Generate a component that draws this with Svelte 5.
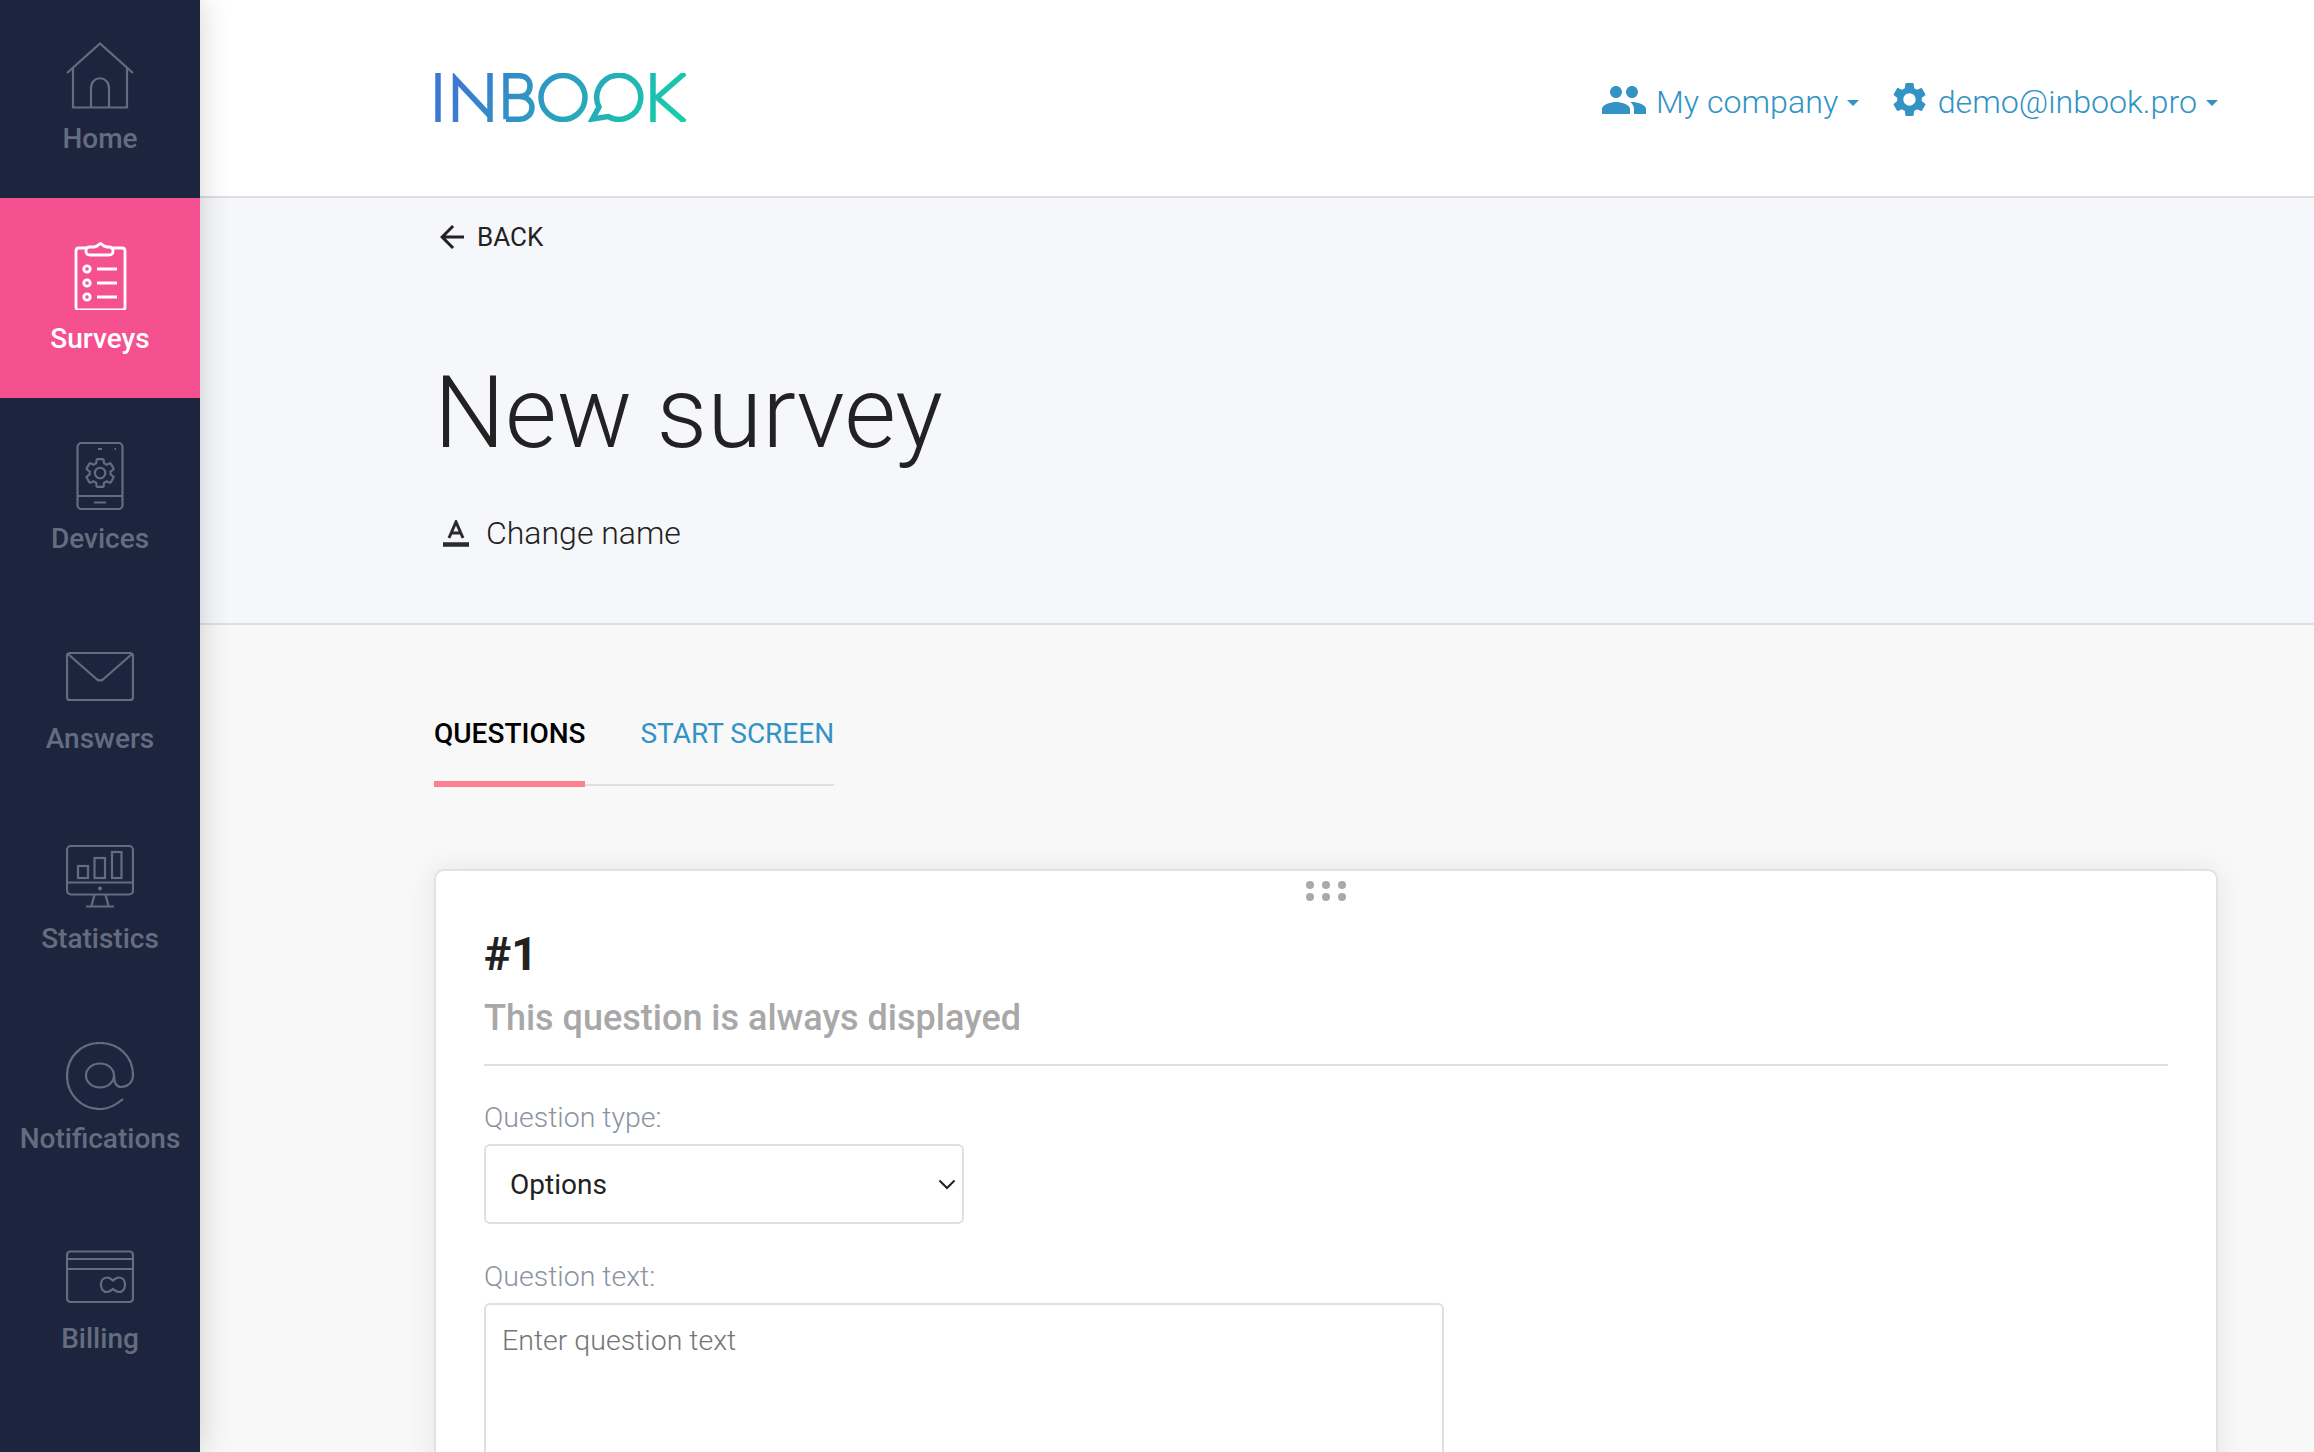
<script>
  const gear = "M19.14 12.94c.04-.3.06-.61.06-.94 0-.32-.02-.64-.07-.94l2.03-1.58c.18-.14.23-.41.12-.61l-1.92-3.32c-.12-.22-.37-.29-.59-.22l-2.39.96c-.5-.38-1.03-.7-1.62-.94l-.36-2.54c-.04-.24-.24-.41-.48-.41h-3.84c-.24 0-.43.17-.47.41l-.36 2.54c-.59.24-1.13.57-1.62.94l-2.39-.96c-.22-.08-.47 0-.59.22L2.74 8.87c-.12.21-.08.47.12.61l2.03 1.58c-.05.3-.09.63-.09.94s.02.64.07.94l-2.03 1.58c-.18.14-.23.41-.12.61l1.92 3.32c.12.22.37.29.59.22l2.39-.96c.5.38 1.03.7 1.62.94l.36 2.54c.05.24.24.41.48.41h3.84c.24 0 .44-.17.47-.41l.36-2.54c.59-.24 1.13-.56 1.62-.94l2.39.96c.22.08.47 0 .59-.22l1.92-3.32c.12-.22.07-.47-.12-.61l-2.01-1.58zM12 15.6c-1.98 0-3.6-1.62-3.6-3.6s1.62-3.6 3.6-3.6 3.6 1.62 3.6 3.6-1.62 3.6-3.6 3.6z";
  const nav = ["Home", "Surveys", "Devices", "Answers", "Statistics", "Notifications", "Billing"];
</script>

<div class="app">
  <aside class="sidebar">
    <nav class="nav">
      {#each nav as label}
        <div class="item" class:active={label === "Surveys"}>
          <svg class="ni" width="68" height="68" viewBox="0 0 68 68" fill="none" stroke="currentColor" stroke-width="2.2">
            {#if label === "Home"}
              <path d="M1 31 L34 1.5 L67 31" />
              <path d="M7 26 V65.5 H61 V26" />
              <path d="M25 65.5 V46 C25 33 43 33 43 46 V65.5" />
            {:else if label === "Surveys"}
              <g stroke-width="2.8">
                <path d="M20 6 H13 Q10 6 10 9 V65 Q10 68 13 68 H56 Q59 68 59 65 V9 Q59 6 56 6 H47" />
                <path d="M24 5 H28 Q31 4.500 33 2.500 Q34.500 1 36 2.500 Q38 4.500 41 5 H43 Q47 5 47 9 Q47 13 43 13 H24 Q20 13 20 9 Q20 5 24 5 Z" />
                <circle cx="21" cy="27" r="3.2" /><circle cx="21" cy="41" r="3.2" /><circle cx="21" cy="55" r="3.2" />
                <path d="M31 27 H51 M31 41 H51 M31 55 H51" />
              </g>
            {:else if label === "Devices"}
              <rect x="11.5" y="1" width="45" height="66" rx="4" />
              <path d="M11.5 54 H56.5 M28 60.5 H40 M32 7 H36 M48.5 7 H50" />
              <path d={gear} transform="translate(16.7 13.6) scale(1.45)" stroke-width="1.5" />
            {:else if label === "Answers"}
              <rect x="1" y="11" width="66" height="47" rx="3" />
              <path d="M2 12 L31 37.5 Q34 39.5 37 37.5 L66 12" />
            {:else if label === "Statistics"}
              <rect x="1" y="4" width="66" height="48.5" rx="4" />
              <path d="M1 40.5 H67" />
              <rect x="12" y="24" width="10" height="12" />
              <rect x="28.500" y="16" width="10.500" height="20" />
              <rect x="46" y="10" width="9.500" height="26" />
              <path d="M28.500 52.500 L25.500 64 M39.500 52.500 L42.500 64 M20 64.500 H48" />
              <circle cx="34" cy="46.500" r="2" fill="currentColor" stroke="none" />
            {:else if label === "Notifications"}
              <path d="M57 57 C50 63 43 67 34 67 C15 67 1 52 1 34 C1 15 15 1 34 1 C53 1 67 15 67 33 C67 41 61 45 55 45 C50 45 48 41 48 33" />
              <ellipse cx="34" cy="33.500" rx="14" ry="12" />
            {:else}
              <rect x="1" y="9.500" width="66" height="50.500" rx="3.500" />
              <path d="M1 17 H67 M1 27 H67" />
              <path d="M41 35.500 C44 35.500 45 37 47 38.500 C49 37 50 35.500 53 35.500 C61 35.500 61 50 53 50 C50 50 49 48.500 47 47 C45 48.500 44 50 41 50 C33 50 33 35.500 41 35.500 Z" />
            {/if}
          </svg>
          <span class="label">{label}</span>
        </div>
      {/each}
    </nav>
  </aside>

  <main class="main">
    <header class="topbar">
      <svg class="logo" width="251" height="49" viewBox="0 0 251 49" fill="none" role="img" aria-label="INBOOK">
        <defs>
          <linearGradient id="lg" gradientUnits="userSpaceOnUse" x1="40" y1="-30" x2="235" y2="80">
            <stop offset="0" stop-color="#3d77d2" />
            <stop offset="1" stop-color="#14d2a8" />
          </linearGradient>
        </defs>
        <g stroke="url(#lg)" stroke-width="5.500">
          <path d="M3 0 V49" />
          <path d="M20.500 49 V6 L55 43 M55 0 V49" />
          <path d="M71 46.250 V2.750 H84 C92 2.750 95 8 95 13 C95 18 92 23.500 84 23.500 H71 M84 23.500 C93 23.500 97 29 97 34.500 C97 41 92 46.250 84 46.250 H71" />
          <circle cx="128" cy="24.500" r="22" />
          <path d="M173 43.500 A22 22 0 1 0 164 34 L157.500 46 Z" />
          <path d="M218 0 V49 M250 0 L222 24.500 L250 49" />
        </g>
      </svg>
      <div class="menus">
        <div class="menu">
          <svg class="people" width="48" height="48" viewBox="0 0 24 24" fill="currentColor"><path d="M16 11c1.660 0 2.990-1.340 2.990-3S17.660 5 16 5c-1.660 0-3 1.340-3 3s1.340 3 3 3zm-8 0c1.660 0 2.990-1.340 2.990-3S9.660 5 8 5C6.340 5 5 6.340 5 8s1.340 3 3 3zm0 2c-2.330 0-7 1.170-7 3.500V19h14v-2.500c0-2.330-4.670-3.500-7-3.500zm8 0c-.29 0-.62.020-.97.050 1.160.84 1.970 1.970 1.970 3.450V19h6v-2.500c0-2.330-4.670-3.500-7-3.500z"/></svg>
          <span>My company</span><i class="caret"></i>
        </div>
        <div class="menu">
          <svg class="cog" width="41" height="41" viewBox="0 0 24 24" fill="currentColor"><path d={gear}/></svg>
          <span>demo@inbook.pro</span><i class="caret"></i>
        </div>
      </div>
    </header>

    <section class="head">
      <div class="back">
        <svg width="36" height="36" viewBox="0 0 24 24" fill="#222"><path d="M20 11H7.830l5.590-5.590L12 4l-8 8 8 8 1.410-1.410L7.830 13H20v-2z"/></svg>
        <span>BACK</span>
      </div>
      <h1>New survey</h1>
      <div class="rename">
        <svg width="26" height="27" viewBox="0 0 26 27" fill="none" stroke="#2b2b2b"><path d="M6 18 L13 2 L20 18 M8.500 13 H17.500" stroke-width="3"/><path d="M0 24.500 H26" stroke-width="4.500"/></svg>
        <span>Change name</span>
      </div>
    </section>

    <section class="body">
      <div class="tabs">
        <div class="tab on">QUESTIONS</div>
        <div class="tab">START SCREEN</div>
      </div>

      <article class="card">
        <div class="grip">{#each Array(6) as _}<b></b>{/each}</div>
        <h2>#1</h2>
        <p class="note">This question is always displayed</p>
        <label class="fl" for="qt">Question type:</label>
        <div class="sel">
          <select id="qt"><option>Options</option></select>
          <svg class="chev" width="18" height="11" viewBox="0 0 18 11" fill="none" stroke="#222" stroke-width="2"><path d="M1.500 1.500 L9 9 L16.500 1.500"/></svg>
        </div>
        <label class="fl second" for="qx">Question text:</label>
        <textarea id="qx" placeholder="Enter question text"></textarea>
      </article>
    </section>
  </main>
</div>

<style>
  :global(body) { margin: 0; }
  .app {
    display: flex;
    height: 1452px;
    overflow: hidden;
    font-family: Roboto, "Liberation Sans", sans-serif;
    background: #f8f8f8;
  }
  .sidebar {
    flex: 0 0 200px;
    background: #1d253e;
    box-shadow: 0 0 30px rgba(0, 0, 0, 0.18);
    z-index: 2;
    color: #646d7e;
  }
  .nav { margin-top: -2px; }
  .item {
    height: 200px;
    box-sizing: border-box;
    padding-top: 44px;
    display: flex;
    flex-direction: column;
    align-items: center;
  }
  .item.active { background: #f55190; color: #fff; }
  .ni { display: block; flex: none; }
  .label { margin-top: 13px; font-size: 28px; line-height: 32px; font-weight: 500; }

  .main { flex: 1; min-width: 0; }
  .topbar {
    height: 196px;
    border-bottom: 2px solid #dddee0;
    background: #fff;
    display: flex;
    align-items: center;
    padding-left: 235px;
    padding-right: 96px;
    justify-content: space-between;
  }
  .logo { margin-top: -1px; }
  .menus { display: flex; gap: 30px; color: #3293c4; font-size: 32.2px; font-weight: 300; margin-top: 7px; }
  .menu { display: flex; align-items: center; }
  .menu span { white-space: nowrap; }
  .people { margin-right: 8px; margin-top: -4px; }
  .cog { margin-right: 7.500px; margin-top: -4px; }
  .caret {
    width: 0; height: 0; margin-left: 9px; margin-top: 2px;
    border-left: 6px solid transparent;
    border-right: 6px solid transparent;
    border-top: 6px solid currentColor;
  }

  .head {
    height: 427px;
    box-sizing: border-box;
    background: #f6f7fb;
    border-bottom: 2px solid #dfe0e2;
    padding: 21px 0 0 234px;
    color: #222;
  }
  .back { display: flex; align-items: center; gap: 7px; font-size: 26px; height: 36px; }
  h1 { margin: 98px 0 0; font-size: 100px; line-height: 120px; font-weight: 300; color: #222; }
  .rename { display: flex; align-items: center; gap: 17px; margin: 41px 0 0 9px; font-size: 32px; font-weight: 300; color: #222; }

  .body { padding: 0 96px 0 234px; }
  .tabs { display: inline-flex; gap: 55px; margin-top: 90px; border-bottom: 2px solid #dfdfdf; vertical-align: top; }
  .tab { font-size: 28px; line-height: 38px; padding-bottom: 29px; color: #3293c4; margin-bottom: -2px; }
  .tab.on { color: #000; font-weight: 500; border-bottom: 6px solid #fc808e; padding-bottom: 28px; margin-bottom: -3px; }

  .card {
    margin-top: 83px;
    position: relative;
    background: #fff;
    border: 2px solid #e2e2e2;
    border-radius: 10px;
    box-shadow: 0 0 30px rgba(0, 0, 0, 0.08);
    padding: 48px;
    box-sizing: border-box;
    height: 800px;
  }
  .grip {
    position: absolute; top: 10px; left: 50%; transform: translateX(-50%);
    display: grid; grid-template-columns: repeat(3, 8px); gap: 4px 8px;
  }
  .grip b { width: 8px; height: 8px; border-radius: 50%; background: #a9a9a9; }
  h2 { margin: 7px 0 0; font-size: 46px; line-height: 56px; font-weight: 700; color: #222; }
  .note {
    margin: 15px 0 0;
    padding-bottom: 25px;
    border-bottom: 2px solid #e0e0e0;
    font-size: 36px;
    line-height: 42px;
    font-weight: 500;
    color: #a8a8a8;
  }
  .fl { display: block; margin-top: 34px; font-size: 28.500px; line-height: 36px; font-weight: 300; color: #8b93a0; }
  .fl.second { margin-top: 35px; }
  .sel { position: relative; width: 480px; margin-top: 8px; }
  .chev { position: absolute; right: 8px; top: 35px; pointer-events: none; }
  select {
    display: block;
    width: 480px;
    height: 80px;
    box-sizing: border-box;
    appearance: none;
    background: #fff;
    border: 2px solid #e0e0e0;
    border-radius: 6px;
    padding-left: 24px;
    font: 400 28px Roboto, sans-serif;
    color: #222;
  }
  textarea {
    display: block;
    margin-top: 8px;
    width: 960px;
    height: 240px;
    box-sizing: border-box;
    border: 2px solid #e0e0e0;
    border-radius: 6px;
    padding: 18px 16px;
    font: 300 28.500px/36px Roboto, sans-serif;
    resize: none;
    outline: none;
  }
  textarea::placeholder { color: #757575; opacity: 1; }
</style>
